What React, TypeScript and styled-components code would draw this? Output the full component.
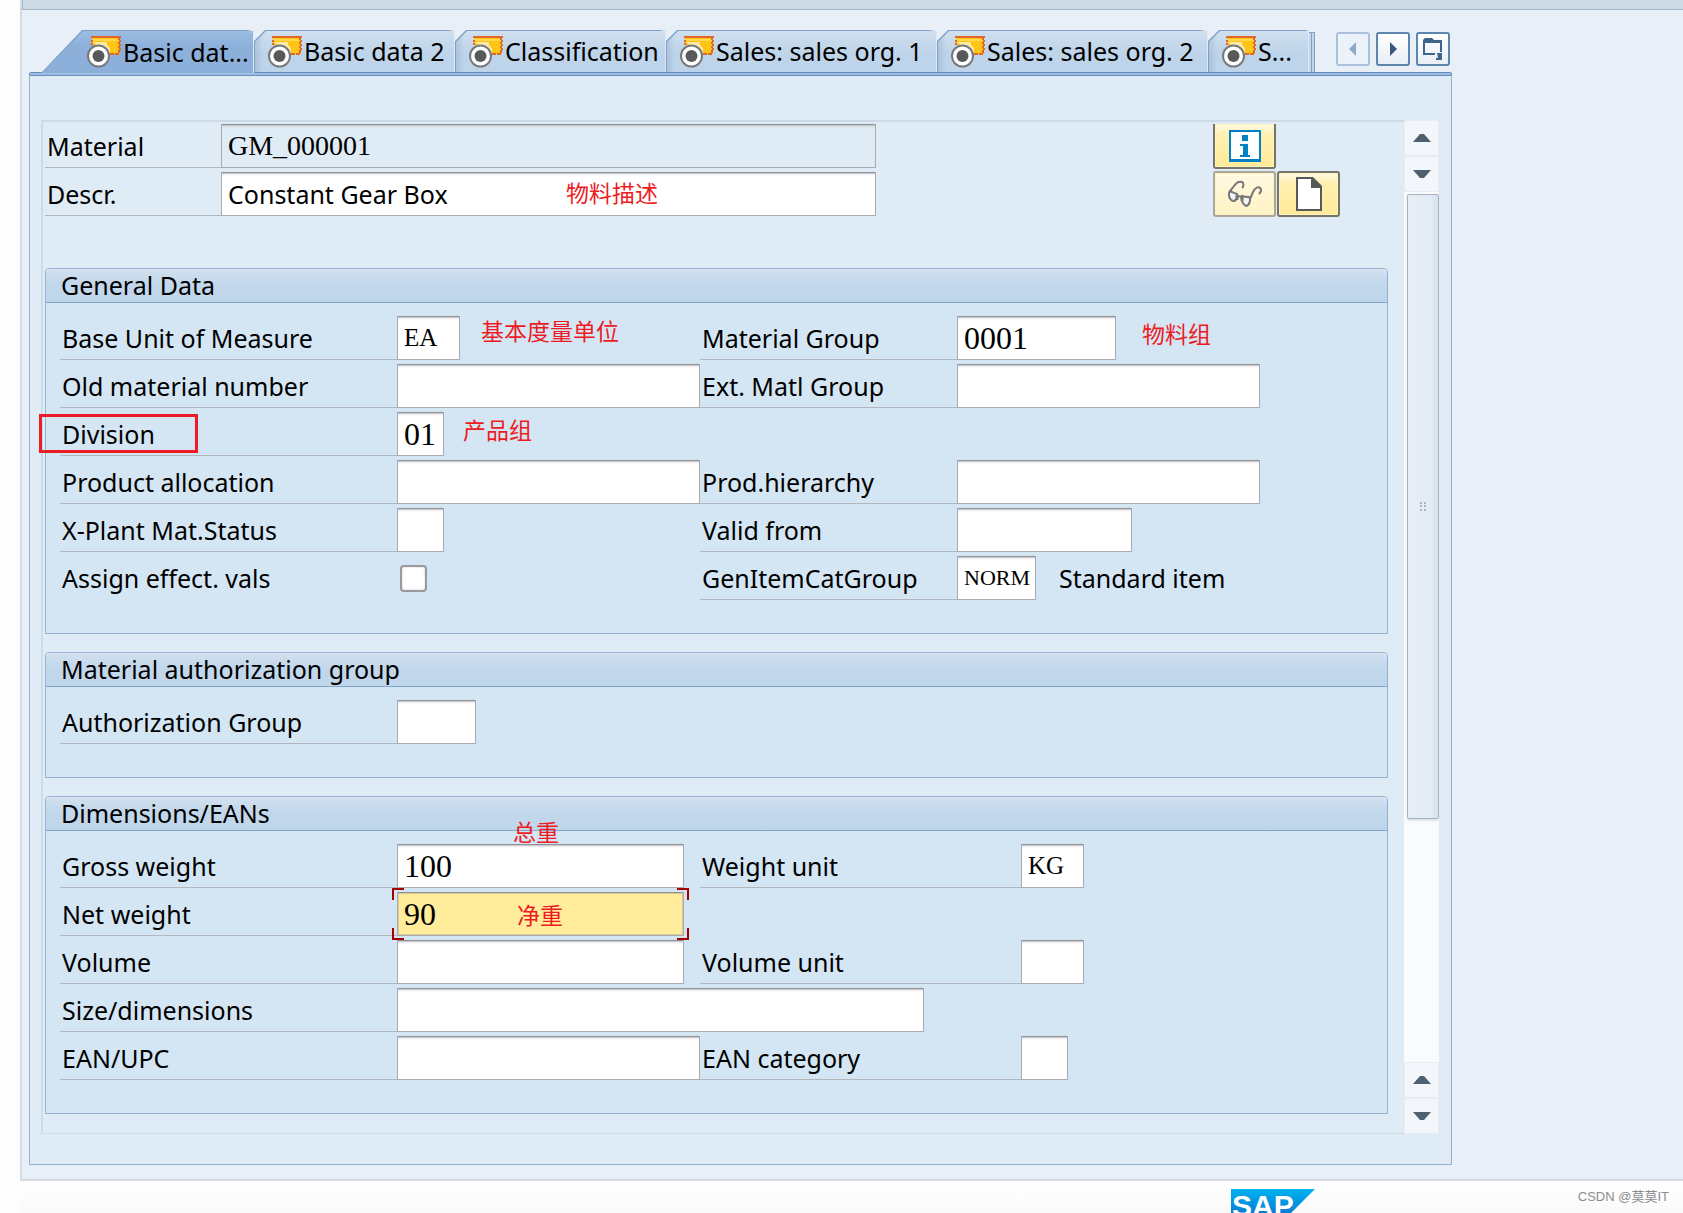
import React from "react";
import styled, { createGlobalStyle, css } from "styled-components";

const sans = `"Noto Sans", "Noto Sans CJK SC", sans-serif`;
const serif = `"Liberation Serif", "Noto Sans CJK SC", serif`;

const GlobalStyle = createGlobalStyle`
  *, *::before, *::after { box-sizing: border-box; }
  body { margin: 0; background: #fdfdfe; color: #000; font-family: ${sans}; font-size: 25px; overflow-x: hidden; }
  button, input { font: inherit; color: inherit; margin: 0; padding: 0; }
`;

const Page = styled.div`
  padding-left: 20px;
`;

const Window = styled.main`
  border-left: 2px solid #d5dbe8;
  border-bottom: 2px solid #d5dae4;
  background: #e8eff7;
`;

const Toolbar = styled.header`
  height: 10px;
  background: #cfdce7;
  border-left: 1px solid #a3b6c8;
  border-bottom: 1px solid #a3b6c8;
`;

const Work = styled.div`
  padding: 20px 231px 14px 7px;
`;

const Strip = styled.div`
  display: flex;
  height: 42px;
  padding: 0 2px 0 12px;
`;

const TabList = styled.div`
  display: flex;
  flex: 1;
`;

const Tab = styled.button<{ $width: number; $active?: boolean }>`
  --cut: ${(p) => (p.$active ? "41px" : "11px")};
  --drop: ${(p) => (p.$active ? "100%" : "11px")};
  position: relative;
  z-index: ${(p) => (p.$active ? 1 : 0)};
  display: flex;
  align-items: center;
  flex: none;
  width: ${(p) => p.$width}px;
  height: ${(p) => (p.$active ? 43 : 42)}px;
  padding-left: ${(p) => (p.$active ? 46 : 14)}px;
  border: 0;
  background: linear-gradient(90deg, #7f9fc5 97%, #dfeaf5 99%);
  clip-path: polygon(var(--cut) 0, 100% 0, 100% 100%, 0 100%, 0 var(--drop));
  line-height: 34px;
  white-space: nowrap;

  &::before {
    content: "";
    position: absolute;
    z-index: -1;
    inset: 1px 1px 0 1px;
    background: ${(p) =>
      p.$active
        ? "linear-gradient(#9dbde1, #8db0db 35%, #8db0db)"
        : "linear-gradient(90deg, rgba(120,150,185,.3), transparent 8px), linear-gradient(#cfdfee, #bed4ea 55%, #bed4ea)"};
    clip-path: polygon(var(--cut) 0, 100% 0, 100% 100%, 0 100%, 0 var(--drop));
  }
`;

const TabEdge = styled.span`
  width: 3px;
  margin-top: 2px;
  border-top: 1px solid #7f9fc5;
  border-right: 1px solid #7f9fc5;
  background: #c3d6ea;
`;

const TabNav = styled.div`
  display: flex;
  gap: 6px;
  padding-top: 2px;
`;

const NavButton = styled.button`
  display: grid;
  place-items: center;
  width: 34px;
  height: 34px;
  border: 2px solid #5c85b0;
  border-radius: 3px;
  background: linear-gradient(#fff, #e9eff7);

  &:disabled {
    border-color: #a5bcda;
    background: #edf3fb;
    opacity: 0.9;
  }
`;

const Bar = styled.div`
  height: 4px;
  border: 1px solid #668fbd;
  border-radius: 2px 2px 0 0;
  background: #9cbce4;
`;

const Panel = styled.section`
  display: flex;
  padding: 44px 12px 30px 11px;
  border: solid #93b1d2;
  border-width: 0 1px 1px;
  background: #dfebf5;
`;

const Sheet = styled.form`
  flex: 1;
  min-width: 0;
  padding: 2px 16px 19px 2px;
  border: solid #cddbe9;
  border-width: 2px 0 1px 2px;
`;

const Heading = styled.div`
  display: flex;
  align-items: flex-start;
  justify-content: space-between;
  margin-bottom: 51px;
`;

const Rows = styled.div`
  display: grid;
  gap: 4px;
`;

const KeyRow = styled.div`
  position: relative;
  display: grid;
  grid-template-columns: 176px 655px;
`;

const Row = styled.div<{ $second: number }>`
  position: relative;
  display: grid;
  grid-template-columns: 337px 303px ${(p) => p.$second}px 1fr;
  height: 44px;
`;

const labelText = css`
  height: 44px;
  padding-left: 2px;
  line-height: 45px;
  white-space: nowrap;
`;

const Label = styled.label<{ $plain?: boolean }>`
  ${labelText}
  border-bottom: 1px solid ${(p) => (p.$plain ? "transparent" : "#b1b7bd")};
`;

type Face = "sans" | "digits" | "code" | "unit" | "narrow";
const faces: Record<Face, string> = {
  sans: `25px ${sans}`,
  digits: `32px ${serif}`,
  code: `28px ${serif}`,
  unit: `25px ${serif}`,
  narrow: `22px ${serif}`,
};

const Input = styled.input<{ $width?: number; $face?: Face; $wide?: boolean }>`
  width: ${(p) => (p.$width ? `${p.$width}px` : "100%")};
  height: 44px;
  padding: 0 0 0 6px;
  border: 1px solid #a9adb2;
  border-top-color: #8d9196;
  border-radius: 1px;
  background: #fff;
  box-shadow: inset 0 2px 2px -1px #b9bcc2;
  font: ${(p) => faces[p.$face ?? "sans"]};
  outline: 0;
  ${(p) => p.$wide && "grid-column: 2 / -1;"}

  &:read-only {
    background: #dfebf5;
  }
`;

const Focus = styled.div`
  position: relative;
  width: 287px;

  & > input {
    background: #ffed9c;
    box-shadow: inset 0 0 0 1px #d9cb8c;
  }

  & > svg {
    position: absolute;
    inset: -4px -5px;
    pointer-events: none;
  }
`;

const Check = styled.input`
  appearance: none;
  width: 27px;
  height: 27px;
  margin: 9px 3px;
  border: 2px solid #97999c;
  border-radius: 4px;
  background: #fff;
  box-shadow: inset 0 0 2px #c7c9cc;
`;

const Plain = styled.output`
  padding-left: 23px;
  line-height: 45px;
`;

const Cell = styled.div`
  display: flex;
  min-width: 0;
`;

const Note = styled.span<{ $x: number; $y: number }>`
  position: absolute;
  z-index: 2;
  left: ${(p) => p.$x}px;
  top: ${(p) => p.$y}px;
  color: #ed1c24;
  font: 23px/24px "Noto Sans CJK SC", sans-serif;
  white-space: nowrap;
  pointer-events: none;
`;

const Mark = styled.span`
  position: absolute;
  left: -21px;
  top: 2px;
  width: 159px;
  height: 39px;
  border: 3px solid #ed1c24;
  pointer-events: none;
`;

const Actions = styled.div`
  display: grid;
  grid-template-columns: 63px 63px;
  grid-template-rows: 45px 46px;
  gap: 2px 1px;
  margin-right: 48px;
`;

const Action = styled.button<{ $first?: boolean }>`
  display: grid;
  place-items: center;
  border: 2px solid #77746a;
  border-radius: 3px;
  background: linear-gradient(#fffbe6, #fff0b0 25%, #ffeb98);
  box-shadow: inset 0 0 0 1px #fff3bd;
  grid-row: 2;
  ${(p) =>
    p.$first &&
    css`
      grid-row: 1;
      border-top: 0;
      border-radius: 0 0 3px 3px;
    `}

  &:disabled {
    border-color: #a9a69c;
    background: linear-gradient(#fff9e2, #fff3c4);
  }
`;

const Group = styled.fieldset`
  min-width: 0;
  margin: 0 0 18px;
  padding: 0;
  border: 1px solid #93b1d2;
  border-radius: 4px 4px 0 0;
  background: #d4e6f4;

  &:last-child {
    margin-bottom: 0;
  }
`;

const GroupTitle = styled.h2`
  height: 34px;
  margin: 0;
  padding-left: 15px;
  border-bottom: 1px solid #84a4ca;
  border-radius: 3px 3px 0 0;
  background: linear-gradient(#d2e1ef, #c2d7eb 45%, #c0d6ea);
  box-shadow: inset 0 1px #dbe8f4;
  font-size: 25px;
  font-weight: 400;
  line-height: 33px;
`;

const GroupBody = styled(Rows)`
  padding: 13px 0 33px 14px;
`;

const ScrollBar = styled.div`
  display: flex;
  flex-direction: column;
  width: 35px;
  background: #fafbfd;
`;

const ScrollButton = styled.button`
  display: grid;
  place-items: center;
  height: 36px;
  border: 1px solid #e8ecf1;
  background: #f3f6fb;
`;

const Track = styled.div`
  flex: 1;
  padding: 2px 0 0 3px;
`;

const Thumb = styled.div`
  display: grid;
  place-items: center;
  height: 72%;
  border: 1px solid #a3b3c3;
  border-radius: 2px;
  background: linear-gradient(90deg, #e8eef5, #e3ebf4 75%, #d5e1ec);
  box-shadow: 0 2px 2px #dfe3e8;
`;

const Footer = styled.footer`
  display: flex;
  align-items: flex-start;
  justify-content: flex-end;
  height: 32px;
  padding: 8px 14px 0 0;
  overflow: hidden;
  background: linear-gradient(#fff, #fafafb);
`;

const Logo = styled.div`
  flex: none;
  width: 84px;
  height: 42px;
  margin-right: auto;
  margin-left: calc(100% - 438px);
  padding: 5px 0 0 1px;
  clip-path: polygon(0 0, 100% 0, 50% 100%, 0 100%);
  background: linear-gradient(#00b4f0, #0a63c8 85%);
  color: #fff;
  font: 700 30px/24px "Liberation Sans", sans-serif;
`;

const Credit = styled.small`
  color: #8b8d90;
  font: 13px/16px "Liberation Sans", "Noto Sans CJK SC", sans-serif;
  white-space: nowrap;
`;

const ViewIcon = () => (
  <svg width="36" height="33" viewBox="0 0 36 33" aria-hidden="true">
    <path d="M5 1h28v18H24L12 10H5z" fill="#ffc514" />
    <path d="M5 4h27v2H6z" fill="#ffd84d" />
    <path d="M4 1h30v2H4zM4 5h2v2H4zM4 8h2v2H4zM32 5h2v2h-2zM32 9h2v2h-2zM32 13h2v2h-2zM23 18h4v2h-4zM28 18h4v2h-4zM31 3h2v2h-2zM31 7h2v2h-2zM31 11h2v2h-2zM31 15h2v3h-2z" fill="#e0662a" />
    <path d="M6 7h14v3l3 3v5h-4z" fill="#ffe9a8" />
    <circle cx="11.500" cy="21" r="10.500" fill="#fff" stroke="#77797b" strokeWidth="2" />
    <circle cx="11.500" cy="21" r="6" fill="#58595b" />
  </svg>
);

const Arrow = ({ up }: { up?: boolean }) => (
  <svg width="20" height="12" viewBox="0 0 20 12" aria-hidden="true">
    <path d={up ? "M8 2h4l7 8H1z" : "M1 2h18l-7 8H8z"} fill="#4f6170" />
  </svg>
);

const InfoIcon = () => (
  <svg width="32" height="32" viewBox="0 0 32 32" aria-hidden="true">
    <path d="M0 0h32v32H0z" fill="#0081c6" />
    <path d="M2 2h28v27H2z" fill="#fff" />
    <path d="M13 5h6v6h-6zM11 14h8v11h2v2H11v-2h3v-9h-3z" fill="#0081c6" />
  </svg>
);

const GlassesIcon = () => (
  <svg width="34" height="28" viewBox="0 0 34 28" fill="none" stroke="#77777a" strokeWidth="2" aria-hidden="true">
    <path d="M1 15c0-4 3-6 5-9 2-3 5-5 8-4 2 1 2 4 0 6M22 19l3-7c2-4 5-6 7-4 2 2 1 4-1 6M9 16l6 1" />
    <path d="M2 11c-2 3-1 9 3 10 4 0 5-5 4-7-2-1-4-1-7-3zM14 16c-1 4 1 9 4 10 4-1 5-7 3-9-2 0-5 0-7-1z" fill="#f4f4f4" />
    <path d="M9 15v5M14 16v5" strokeWidth="3" />
  </svg>
);

const PageIcon = () => (
  <svg width="26" height="34" viewBox="0 0 26 34" aria-hidden="true">
    <path d="M1 1h15l9 9v23H1z" fill="#fff" stroke="#58595b" strokeWidth="2" />
    <path d="M15 0h2l9 9v2H15z" fill="#58595b" />
  </svg>
);

const ListIcon = () => (
  <svg width="20" height="23" viewBox="0 0 20 23" aria-hidden="true">
    <path d="M0 2l2-2h7l2 2h8v12h-2V5H2v10h10v2H0zM14 15h5v7h-6v-2h2z" fill="#3f6389" />
  </svg>
);

const tabs = [
  { text: "Basic dat...", width: 213 },
  { text: "Basic data 2", width: 201 },
  { text: "Classification", width: 211 },
  { text: "Sales: sales org. 1", width: 271 },
  { text: "Sales: sales org. 2", width: 271 },
  { text: "S...", width: 101 },
];

type FieldProps = { id: string; label: string; width?: number; value?: string; face?: Face; wide?: boolean };

const Field = ({ id, label, width, value = "", face, wide }: FieldProps) => (
  <>
    <Label htmlFor={id}>{label}</Label>
    {wide ? (
      <Input id={id} $width={width} $face={face} $wide defaultValue={value} />
    ) : (
      <Cell>
        <Input id={id} $width={width} $face={face} defaultValue={value} />
      </Cell>
    )}
  </>
);

export default function App() {
  return (
    <Page>
      <GlobalStyle />
      <Window>
        <Toolbar />
        <Work>
          <Strip>
            <TabList role="tablist">
              {tabs.map((t, i) => (
                <Tab key={t.text} type="button" role="tab" aria-selected={i === 0} $width={t.width} $active={i === 0}>
                  <ViewIcon />
                  {t.text}
                </Tab>
              ))}
              <TabEdge />
              <TabEdge />
            </TabList>
            <TabNav>
              <NavButton type="button" disabled aria-label="Previous tab">
                <svg width="10" height="16" viewBox="0 0 10 16"><path d="M8 1v14L1 8z" fill="#86a3c3" /></svg>
              </NavButton>
              <NavButton type="button" aria-label="Next tab">
                <svg width="10" height="16" viewBox="0 0 10 16"><path d="M2 1v14l7-7z" fill="#36587c" /></svg>
              </NavButton>
              <NavButton type="button" aria-label="List of tabs">
                <ListIcon />
              </NavButton>
            </TabNav>
          </Strip>
          <Bar />
          <Panel>
            <Sheet>
              <Heading>
                <Rows>
                  <KeyRow>
                    <Label htmlFor="material">Material</Label>
                    <Input id="material" readOnly $face="code" defaultValue="GM_000001" />
                  </KeyRow>
                  <KeyRow>
                    <Label htmlFor="descr">Descr.</Label>
                    <Input id="descr" defaultValue="Constant Gear Box" />
                    <Note $x={521} $y={8}>物料描述</Note>
                  </KeyRow>
                </Rows>
                <Actions>
                  <Action type="button" $first aria-label="Information"><InfoIcon /></Action>
                  <Action type="button" disabled aria-label="Display"><GlassesIcon /></Action>
                  <Action type="button" aria-label="Create"><PageIcon /></Action>
                </Actions>
              </Heading>

              <Group>
                <GroupTitle>General Data</GroupTitle>
                <GroupBody>
                  <Row $second={257}>
                    <Field id="uom" label="Base Unit of Measure" width={63} value="EA" face="unit" />
                    <Field id="matgroup" label="Material Group" width={159} value="0001" face="digits" />
                    <Note $x={421} $y={2}>基本度量单位</Note>
                    <Note $x={1082} $y={5}>物料组</Note>
                  </Row>
                  <Row $second={257}>
                    <Field id="oldnumber" label="Old material number" width={303} />
                    <Field id="extgroup" label="Ext. Matl Group" width={303} />
                  </Row>
                  <Row $second={257}>
                    <Field id="division" label="Division" width={47} value="01" face="digits" />
                    <Note $x={403} $y={5}>产品组</Note>
                    <Mark />
                  </Row>
                  <Row $second={257}>
                    <Field id="allocation" label="Product allocation" width={303} />
                    <Field id="hierarchy" label="Prod.hierarchy" width={303} />
                  </Row>
                  <Row $second={257}>
                    <Field id="status" label="X-Plant Mat.Status" width={47} />
                    <Field id="validfrom" label="Valid from" width={175} />
                  </Row>
                  <Row $second={257}>
                    <Label htmlFor="effect" $plain>Assign effect. vals</Label>
                    <Cell><Check id="effect" type="checkbox" /></Cell>
                    <Label htmlFor="itemcat">GenItemCatGroup</Label>
                    <Cell>
                      <Input id="itemcat" $width={79} $face="narrow" defaultValue="NORM" />
                      <Plain htmlFor="itemcat">Standard item</Plain>
                    </Cell>
                  </Row>
                </GroupBody>
              </Group>

              <Group>
                <GroupTitle>Material authorization group</GroupTitle>
                <GroupBody>
                  <Row $second={257}>
                    <Field id="authgroup" label="Authorization Group" width={79} />
                  </Row>
                </GroupBody>
              </Group>

              <Group>
                <GroupTitle>Dimensions/EANs</GroupTitle>
                <GroupBody>
                  <Row $second={321}>
                    <Field id="gross" label="Gross weight" width={287} value="100" face="digits" />
                    <Field id="weightunit" label="Weight unit" width={63} value="KG" face="unit" />
                    <Note $x={453} $y={-25}>总重</Note>
                  </Row>
                  <Row $second={321}>
                    <Label htmlFor="net">Net weight</Label>
                    <Focus>
                      <Input id="net" $face="digits" defaultValue="90" />
                      <svg width="297" height="52" viewBox="0 0 297 52" fill="none" stroke="#a50000" strokeWidth="2" aria-hidden="true">
                        <path d="M1 12V1h11M285 1h11v11M1 40v11h11M285 51h11V40" />
                      </svg>
                    </Focus>
                    <Note $x={457} $y={10}>净重</Note>
                  </Row>
                  <Row $second={321}>
                    <Field id="volume" label="Volume" width={287} />
                    <Field id="volumeunit" label="Volume unit" width={63} />
                  </Row>
                  <Row $second={321}>
                    <Field id="size" label="Size/dimensions" width={527} wide />
                  </Row>
                  <Row $second={321}>
                    <Field id="ean" label="EAN/UPC" width={303} />
                    <Field id="eancat" label="EAN category" width={47} />
                  </Row>
                </GroupBody>
              </Group>
            </Sheet>
            <ScrollBar>
              <ScrollButton type="button" aria-label="Line up"><Arrow up /></ScrollButton>
              <ScrollButton type="button" aria-label="Line down"><Arrow /></ScrollButton>
              <Track>
                <Thumb>
                  <svg width="6" height="9" viewBox="0 0 6 9" fill="#a9b5c2" aria-hidden="true">
                    <path d="M0 0h2v2H0zM4 0h2v2H4zM0 3h2v2H0zM4 3h2v2H4zM0 7h2v2H0zM4 7h2v2H4z" />
                  </svg>
                </Thumb>
              </Track>
              <ScrollButton type="button" aria-label="Page up"><Arrow up /></ScrollButton>
              <ScrollButton type="button" aria-label="Page down"><Arrow /></ScrollButton>
            </ScrollBar>
          </Panel>
        </Work>
      </Window>
      <Footer>
        <Logo>SAP</Logo>
        <Credit>CSDN @莫莫IT</Credit>
      </Footer>
    </Page>
  );
}
